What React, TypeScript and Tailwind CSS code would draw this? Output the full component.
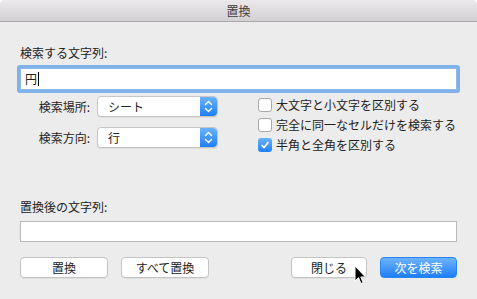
import React from 'react'

function Stepper() {
    return (
        <div className="w-[17px] h-full rounded-r-[4px] bg-gradient-to-b from-[#69b1fb] to-[#1b7ff9] flex items-center justify-center">
            <svg width="9" height="13" viewBox="0 0 9 13" fill="none" stroke="white" strokeWidth="1.4" strokeLinecap="round" strokeLinejoin="round">
                <path d="M1.5 4.5 L4.5 1.5 L7.5 4.5" />
                <path d="M1.5 8.5 L4.5 11.5 L7.5 8.5" />
            </svg>
        </div>
    )
}

function SelectRow({ label, value }: { label: string; value: string }) {
    return (
        <div className="flex items-center h-[21px]">
            <span className="w-[71px] text-right pr-[1px] text-[12px] text-[#222]">{label}</span>
            <div className="ml-[6px] w-[121px] h-[21px] flex bg-white border border-[#c6c6c6] rounded-[4px] shadow-[0_1px_0_rgba(0,0,0,0.06)]">
                <span className="flex-1 pl-[10px] text-[12px] leading-[19px] text-[#222]">{value}</span>
                <Stepper />
            </div>
        </div>
    )
}

function Checkbox({ label, checked }: { label: string; checked?: boolean }) {
    return (
        <div className="flex items-center h-[20px]">
            {checked ? (
                <div className="w-[14px] h-[14px] rounded-[3px] bg-gradient-to-b from-[#69b1fb] to-[#1b7ff9] flex items-center justify-center">
                    <svg width="10" height="10" viewBox="0 0 10 10" fill="none" stroke="white" strokeWidth="1.6" strokeLinecap="round" strokeLinejoin="round">
                        <path d="M2 5.3 L4.1 7.6 L8 2.4" />
                    </svg>
                </div>
            ) : (
                <div className="w-[14px] h-[14px] rounded-[3px] bg-white border border-[#a9a9a9]" />
            )}
            <span className="ml-[4px] text-[12px] text-[#222]">{label}</span>
        </div>
    )
}

export default function App() {
    return (
        <div className="w-[477px] h-[299px] bg-white overflow-hidden font-['Noto_Sans_CJK_JP',sans-serif] leading-[16px]">
            <div className="w-full h-full bg-[#ececec] rounded-t-[5px] overflow-hidden relative">
                <div className="h-[22px] bg-gradient-to-b from-[#ebe9eb] to-[#d2d0d2] border-b border-[#aaa9aa] flex items-center justify-center">
                    <span className="text-[12px] text-[#3f3f3f]">置換</span>
                </div>
                <div className="px-[20px] flex flex-col">
                    <span className="mt-[23px] text-[12px] text-[#222]">検索する文字列:</span>
                    <div className="mt-[7px] h-[22px] bg-white border border-[#8fb9e6] ring-[3px] ring-[#7fb2ea] rounded-[1px] flex items-center pl-[4px]">
                        <span className="text-[12px] text-[#222]">円</span>
                        <span className="ml-[1px] w-[1px] h-[14px] bg-black" />
                    </div>
                    <div className="mt-[6px] flex items-start">
                        <div className="flex flex-col gap-[10px]">
                            <SelectRow label="検索場所:" value="シート" />
                            <SelectRow label="検索方向:" value="行" />
                        </div>
                        <div className="ml-[40px] flex flex-col -mt-[1px]">
                            <Checkbox label="大文字と小文字を区別する" />
                            <Checkbox label="完全に同一なセルだけを検索する" />
                            <Checkbox label="半角と全角を区別する" checked />
                        </div>
                    </div>
                    <span className="mt-[44px] text-[12px] text-[#222]">置換後の文字列:</span>
                    <div className="mt-[6px] h-[21px] bg-white border border-[#b9b9b9]" />
                    <div className="mt-[15px] flex items-center">
                        <button className="w-[88px] h-[21px] bg-white border border-[#c3c3c3] rounded-[4px] text-[12px] text-[#222] shadow-[0_1px_0_rgba(0,0,0,0.05)]">置換</button>
                        <button className="ml-[13px] w-[88px] h-[21px] bg-white border border-[#c3c3c3] rounded-[4px] text-[12px] text-[#222] shadow-[0_1px_0_rgba(0,0,0,0.05)]">すべて置換</button>
                        <button className="ml-auto w-[76px] h-[21px] bg-white border border-[#c3c3c3] rounded-[4px] text-[12px] text-[#222] shadow-[0_1px_0_rgba(0,0,0,0.05)]">閉じる</button>
                        <button className="ml-[13px] w-[77px] h-[21px] rounded-[4px] bg-gradient-to-b from-[#6cb3fb] to-[#1a7ef8] border border-[#2a84f0] text-[12px] text-white">次を検索</button>
                    </div>
                </div>
                <svg className="absolute left-[354px] top-[265px]" width="13" height="21" viewBox="0 0 13 21">
                    <path d="M1 1 L1 16 L4.5 12.7 L7 18.6 L9.2 17.6 L6.8 12 L11.5 12 Z" fill="black" stroke="white" strokeWidth="1" strokeLinejoin="round" />
                </svg>
            </div>
        </div>
    )
}
